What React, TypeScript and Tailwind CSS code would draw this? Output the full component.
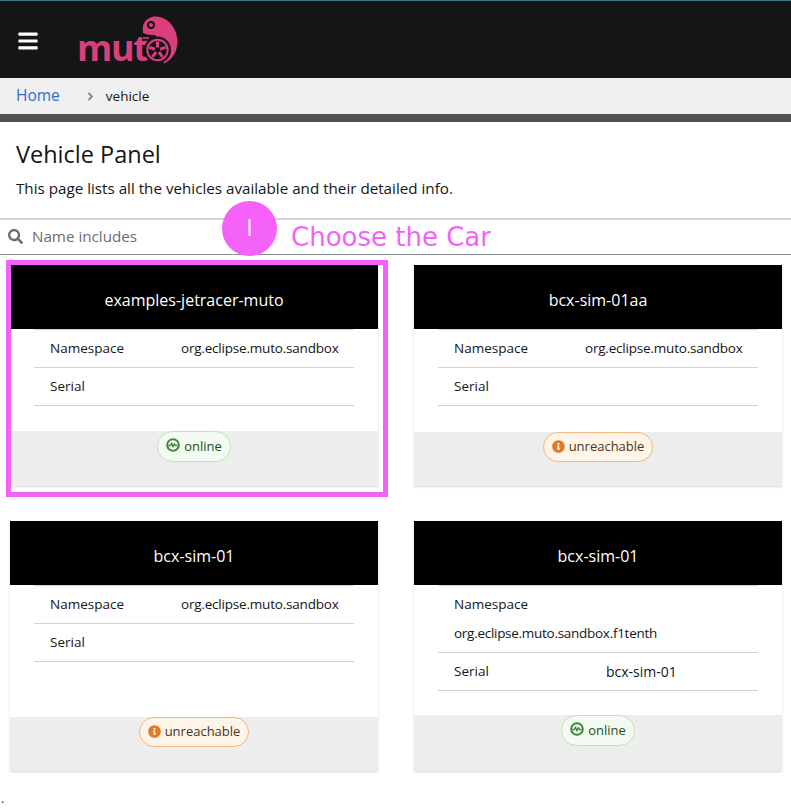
import React from 'react';
import { FaBars, FaSearch, FaInfoCircle, FaAngleRight } from 'react-icons/fa';

const BODY_FONT = "font-['Open_Sans',sans-serif]";

function MutoLogo() {
  return (
    <div className="flex items-end h-[52px] ml-[38px] mt-[16px] relative w-[105px]">
      <span className="font-['Open_Sans',sans-serif] font-bold text-[36px] leading-none text-[#d93f7c] mb-[3px] tracking-[-1.4px]">mut</span>
      <svg className="absolute left-[63px] top-[-7px]" width="42" height="56" viewBox="140 10 42 56" fill="none">
        <path
          d="M143 29 C142 23 148 16 156 16.5 C168 17 177 28 177.5 41 C177.5 52 172 60 164 63.5 L158 50 L156 35.5 C151 35 146 34.5 143 33 Z"
          fill="#d93f7c"
        />
        <circle cx="157.5" cy="50" r="13.5" fill="#151515" />
        <circle cx="157.5" cy="50" r="10.2" fill="none" stroke="#d93f7c" strokeWidth="2" />
        <path
          d="M157.5 41.5 V47.5 M165.6 47.4 L160 49.2 M162.5 56.9 L159 52 M152.5 56.9 L156 52 M149.4 47.4 L155 49.2"
          stroke="#d93f7c"
          strokeWidth="3"
        />
        <circle cx="157.5" cy="50" r="1.3" fill="#151515" />
        <circle cx="151" cy="25" r="4" fill="#151515" />
        <circle cx="151" cy="25" r="2" fill="#d93f7c" />
        <path d="M143 38 H149 M144 41.5 H147" stroke="#d93f7c" strokeWidth="1.3" />
      </svg>
    </div>
  );
}

function OnlineIcon() {
  return (
    <svg width="14" height="14" viewBox="0 0 14 14" fill="none" className="shrink-0 mb-[3px]">
      <circle cx="7" cy="7" r="5.8" stroke="#3e8635" strokeWidth="2" />
      <path d="M2.5 7.5 H4.5 L5.6 5 L7 9 L8.3 5.6 L9.2 7.5 H11.5" stroke="#3e8635" strokeWidth="1.3" strokeLinejoin="round" />
    </svg>
  );
}

function StatusBadge({ status }: { status: 'online' | 'unreachable' }) {
  if (status === 'online') {
    return (
      <span className="inline-flex items-center gap-[4px] h-[31px] px-[8px] rounded-full border border-[#bde5b8] bg-[#f3faf2] text-[#1e4f18] text-[13px]">
        <OnlineIcon />
        online
      </span>
    );
  }
  return (
    <span className="inline-flex items-center gap-[4px] h-[30px] px-[8px] pb-[1px] rounded-full border border-[#efb97f] bg-[#fff4e8] text-[#473521] text-[13px]">
      <FaInfoCircle className="text-[#e07b28] text-[13px] shrink-0" />
      unreachable
    </span>
  );
}

function Row({ label, value, valueClass = 'w-[157px] tracking-[-0.2px]' }: { label: string; value?: string; valueClass?: string }) {
  return (
    <div className="flex items-center h-[38px] px-[16px] border-b border-[#d2d2d2]">
      <span className="flex-1">{label}</span>
      <span className={`${valueClass} whitespace-nowrap`}>{value}</span>
    </div>
  );
}

function VehicleCard({
  name,
  status,
  footer,
  children,
}: {
  name: string;
  status: 'online' | 'unreachable';
  footer: string;
  children: React.ReactNode;
}) {
  return (
    <div className="flex flex-col bg-white shadow-[0_1px_2px_rgba(0,0,0,0.16)]">
      <div className="h-[64px] shrink-0 bg-black text-white text-[16px] pt-[6px] flex items-center justify-center">{name}</div>
      <div className="flex-1 mx-[24px] border-t border-[#d2d2d2] text-[13.5px] text-[#151515]">{children}</div>
      <div className={`${footer} shrink-0 bg-[#ededed] flex justify-center items-start`}>
        <StatusBadge status={status} />
      </div>
    </div>
  );
}

export default function App() {
  return (
    <div className={`relative w-[791px] h-[808px] bg-white text-[#151515] overflow-hidden ${BODY_FONT}`}>
      <header className="h-[78px] bg-[#151515] border-t border-[#3d7a80] flex items-start">
        <FaBars className="text-white text-[22px] ml-[17px] mt-[29px] shrink-0" />
        <MutoLogo />
      </header>

      <nav className="h-[36px] bg-[#f0f0f0] flex items-center pl-[16px]">
        <span className="text-[15.5px] text-[#2b6fc9]">Home</span>
        <FaAngleRight className="text-[#8a8d90] text-[13px] ml-[24px]" />
        <span className="text-[13.5px] ml-[9px]">vehicle</span>
      </nav>
      <div className="h-[8px] bg-[#4f5255]" />

      <section className="h-[96px] px-[16px] pt-[17px]">
        <h1 className="text-[23.5px] leading-[30px] font-medium">Vehicle Panel</h1>
        <p className="text-[15.2px] leading-[24px] mt-[7px]">This page lists all the vehicles available and their detailed info.</p>
      </section>

      <div className="h-[37px] border-t-2 border-b border-t-[#d2d2d2] border-b-[#8a8d90] flex items-center pl-[8px] pb-[1px]">
        <FaSearch className="text-[#6a6e73] text-[15px]" />
        <span className="ml-[9px] text-[15.2px] text-[#6a6e73]">Name includes</span>
      </div>

      <main className="grid grid-cols-[368px_368px] grid-rows-[221px_250px] gap-x-[36px] gap-y-[35px] pl-[10px] pt-[10px]">
        <VehicleCard name="examples-jetracer-muto" status="online" footer="h-[55px]">
          <Row label="Namespace" value="org.eclipse.muto.sandbox" />
          <Row label="Serial" />
        </VehicleCard>
        <VehicleCard name="bcx-sim-01aa" status="unreachable" footer="h-[54px]">
          <Row label="Namespace" value="org.eclipse.muto.sandbox" />
          <Row label="Serial" />
        </VehicleCard>
        <VehicleCard name="bcx-sim-01" status="unreachable" footer="h-[54px]">
          <Row label="Namespace" value="org.eclipse.muto.sandbox" />
          <Row label="Serial" />
        </VehicleCard>
        <VehicleCard name="bcx-sim-01" status="online" footer="h-[56px]">
          <div className="h-[67px] px-[16px] pt-[8px] border-b border-[#d2d2d2] flex flex-col gap-[9px]">
            <span>Namespace</span>
            <span className="tracking-[-0.28px]">org.eclipse.muto.sandbox.f1tenth</span>
          </div>
          <Row label="Serial" value="bcx-sim-01" valueClass="w-[136px] text-[14px]" />
        </VehicleCard>
      </main>

      <span className="absolute left-[1px] bottom-[3px] text-[12px] leading-none">.</span>

      {/* annotation overlay */}
      <div className="absolute left-[6px] top-[260px] w-[382px] h-[237px] border-[5px] border-[#f462f9]" />
      <div className="absolute left-[222px] top-[201px] w-[55px] h-[55px] rounded-full bg-[#f462f9] flex items-center justify-center text-white text-[23px] font-normal pb-[3px]">
        I
      </div>
      <span className="absolute left-[291px] top-[219px] font-['DejaVu_Sans',sans-serif] text-[26px] leading-[36px] text-[#f462f9] whitespace-nowrap">
        Choose the Car
      </span>
    </div>
  );
}
